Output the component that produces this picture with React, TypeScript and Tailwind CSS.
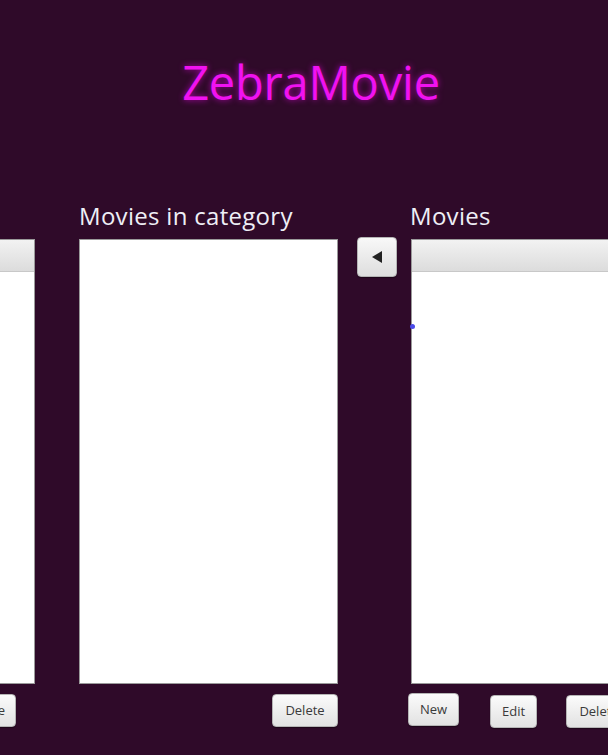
import React from "react";

const font = { fontFamily: '"Open Sans", "Noto Sans", sans-serif' };

function Btn({ label, className = "" }: { label: string; className?: string }) {
  return (
    <div
      className={
        "h-[33px] px-[10px] flex items-center justify-center rounded-[4px] border border-[#b5b5b5] bg-gradient-to-b from-[#fbfbfb] to-[#e2e2e2] text-[13px] text-[#3a3a3a] shadow-[0_1px_1px_rgba(0,0,0,0.4)] " +
        className
      }
      style={font}
    >
      {label}
    </div>
  );
}

function ListBox({ header = false, dot = false }: { header?: boolean; dot?: boolean }) {
  return (
    <div className="relative w-[259px] h-[445px] bg-white border border-[#9a9a9a] flex flex-col">
      {header && (
        <div className="h-[32px] bg-gradient-to-b from-[#f2f2f2] to-[#dcdcdc] border-b border-[#c8c8c8]" />
      )}
      {dot && (
        <div className="absolute left-[-2px] top-[84px] w-[5px] h-[5px] rounded-full bg-[#4a4ae8]" />
      )}
    </div>
  );
}

export default function App() {
  return (
    <div className="w-[608px] h-[755px] bg-[#2f0a29] overflow-hidden relative" style={font}>
      <div className="h-[205px] flex justify-center pt-[50px] pl-[14px]">
        <div className="text-[47px] leading-[64px] text-[#f012f0] [text-shadow:0_0_6px_rgba(255,0,255,0.6)] tracking-[-0.2px]">
          ZebraMovie
        </div>
      </div>
      <div className="flex ml-[-224px]">
        {/* left column */}
        <div className="flex flex-col w-[259px]">
          <div className="h-[34px]" />
          <ListBox header />
          <div className="flex justify-end mt-[10px] mr-[19px]">
            <Btn label="Delete" />
          </div>
        </div>
        {/* middle column */}
        <div className="flex flex-col w-[259px] ml-[44px]">
          <div className="h-[34px] text-[24px] leading-[26px] text-[#eeeef6] mt-[-2px] mb-[2px] whitespace-nowrap tracking-[0.3px]">Movies in category</div>
          <ListBox />
          <div className="flex justify-end mt-[10px]">
            <Btn label="Delete" className="w-[66px]" />
          </div>
        </div>
        {/* arrow */}
        <div className="ml-[19px] pt-[32px]">
          <div className="w-[40px] h-[40px] rounded-[4px] border border-[#b5b5b5] bg-gradient-to-b from-[#f8f8f8] to-[#dedede] flex items-center justify-center shadow-[0_1px_1px_rgba(0,0,0,0.4)]">
            <svg width="12" height="14" viewBox="0 0 12 14">
              <polygon points="11,1 11,13 1,7" fill="#222" />
            </svg>
          </div>
        </div>
        {/* right column */}
        <div className="flex flex-col w-[259px] ml-[14px]">
          <div className="h-[34px] text-[24px] leading-[26px] text-[#eeeef6] mt-[-2px] mb-[2px] ml-[-1px] tracking-[0.3px]">Movies</div>
          <ListBox header dot />
          <div className="flex mt-[9px] ml-[-3px]">
            <Btn label="New" className="w-[51px]" />
            <Btn label="Edit" className="w-[47px] ml-[31px] mt-[2px]" />
            <Btn label="Delete" className="w-[66px] ml-[29px] mt-[2px]" />
          </div>
        </div>
      </div>
    </div>
  );
}
